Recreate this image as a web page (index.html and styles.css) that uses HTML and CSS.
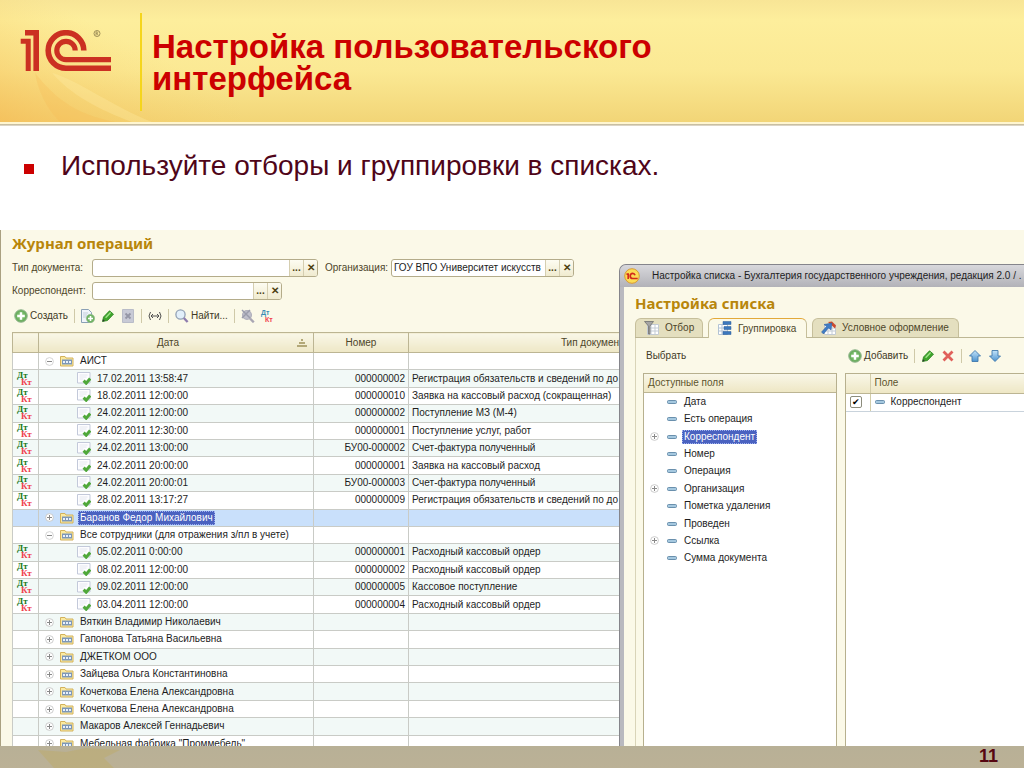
FILE: index.html
```
<!DOCTYPE html>
<html lang="ru">
<head>
    <meta charset="UTF-8">
    <meta name="viewport" content="width=device-width, initial-scale=1.0">
    <title>Настройка пользовательского интерфейса</title>
    <link rel="stylesheet" href="styles.css">
</head>
<body>
    <!-- Shared icons -->
    <svg class="sprite" width="0" height="0" aria-hidden="true">
        <defs>
            <linearGradient id="blue" x1="0" y1="0" x2="0" y2="1">
                <stop offset="0" stop-color="#c3e4fa"/>
                <stop offset="1" stop-color="#4c93cf"/>
            </linearGradient>
            <radialGradient id="green">
                <stop offset="0" stop-color="#8fd07c"/>
                <stop offset="1" stop-color="#62a658"/>
            </radialGradient>
        </defs>
        <symbol id="add" viewBox="0 0 14 14">
            <circle cx="7" cy="7" r="6.3" fill="url(#green)" stroke="#9aba94"/>
            <path d="M7 3.2v7.6M3.2 7h7.6" stroke="#fff" stroke-width="2.4"/>
        </symbol>
        <symbol id="pencil" viewBox="0 0 14 14">
            <path d="M1.500 12.500l1-4.500L8.500 1.800l4 3.400-6 6.300z" fill="#3fa52c" stroke="#2a8220" stroke-width=".8"/>
            <path d="M4.600 8.800l5-5.200" stroke="#a2e48c" stroke-width="1.400"/>
            <path d="M1.500 12.500l.5-2.200 1.800 1.600z" fill="#333"/>
        </symbol>
        <symbol id="plus" viewBox="0 0 9 9">
            <circle cx="4.5" cy="4.5" r="3.9" fill="#fff" stroke="#c0c0c0" stroke-width=".8"/>
            <path d="M4.5 2v5M2 4.5h5" stroke="#8a8a8a"/>
        </symbol>
        <symbol id="minus" viewBox="0 0 9 9">
            <circle cx="4.5" cy="4.5" r="3.9" fill="#fff" stroke="#cacaca" stroke-width=".8"/>
            <path d="M2 4.5h5" stroke="#8a8a8a"/>
        </symbol>
        <symbol id="folder" viewBox="0 0 14 12">
            <path d="M.5 11V1.500h4.500l1 1.500h7V11z" fill="#fbeaa0" stroke="#d3b25c"/>
            <path d="M2 4.500h10v5H2z" fill="#7d97b8"/>
            <path d="M3 7h2M6 7h2M9 7h2" stroke="#e8f1fb" stroke-width="1.800"/>
        </symbol>
        <symbol id="doc" viewBox="0 0 14 13">
            <path d="M.5.500h12.500v10.500H.5z" fill="#fdfdff" stroke="#c3c9da"/>
            <path d="M2.500 3h8M2.500 5h7M2.500 7h4" stroke="#dde1eb" stroke-width=".8"/>
            <path d="M6.600 8.600l2.600 2.600 4-4.600" fill="none" stroke="#4fa83a" stroke-width="3"/>
        </symbol>
        <symbol id="field" viewBox="0 0 10 4">
            <rect x=".5" y=".5" width="9" height="3" rx="1" fill="#a5c8df" stroke="#5d87a5" stroke-width=".9"/>
        </symbol>
    </svg>

    <header class="slide-header">
        <svg class="swirl" viewBox="0 0 240 124" preserveAspectRatio="none" aria-hidden="true">
            <defs>
                <linearGradient id="glow" x1="0" y1="1" x2="1" y2="0">
                    <stop offset="0" stop-color="#f5bb55" stop-opacity=".75"/>
                    <stop offset=".6" stop-color="#f8d470" stop-opacity="0"/>
                </linearGradient>
            </defs>
            <path d="M0 0h240v124H0z" fill="url(#glow)"/>
            <path d="M35 74c20 26 40 42 80 50H60C46 110 38 92 35 74z" fill="#f8b950" opacity=".25"/>
            <path d="M52 74c30 10 60 34 100 50h-20C100 112 70 96 52 74z" fill="#fff0a8" opacity=".3"/>
        </svg>
        <svg class="logo" viewBox="0 0 92 42" role="img" aria-label="1С">
            <g fill="none" stroke="#cb3022">
                <path d="M5 2.800h11.200V41" stroke-width="5.600"/>
                <path d="M.7 11.200h7.500V41" stroke-width="5"/>
                <path d="M63.800 20.500A17.800 17.800 0 1 0 46 38.300H91" stroke-width="5.600"/>
                <path d="M55.200 20.500A9.200 9.200 0 1 0 46 29.700H91" stroke-width="5.200"/>
            </g>
            <circle cx="77" cy="3.500" r="3" fill="none" stroke="#8a7a4a" stroke-width=".8"/>
            <path d="M76 5.400V1.900h1.200a1 1 0 0 1 0 1.800H76m1.200 0l1 1.700" fill="none" stroke="#8a7a4a" stroke-width=".7"/>
        </svg>
        <h1>Настройка пользовательского<br>интерфейса</h1>
    </header>

    <ul class="bullets">
        <li>Используйте отборы и группировки в списках.</li>
    </ul>

    <main class="screen">
        <section class="journal">
            <h2>Журнал операций</h2>
            <div class="filters">
                <label class="type-label" for="doc-type">Тип документа:</label>
                <div class="picker picker-type">
                    <input type="text" id="doc-type">
                    <button type="button">...</button><button type="button" class="clear">✕</button>
                </div>
                <label class="org-label" for="org">Организация:</label>
                <div class="picker picker-org">
                    <input type="text" id="org" value="ГОУ ВПО Университет искусств">
                    <button type="button">...</button><button type="button" class="clear">✕</button>
                </div>
            </div>
            <div class="filters">
                <label class="type-label" for="partner">Корреспондент:</label>
                <div class="picker picker-partner">
                    <input type="text" id="partner">
                    <button type="button">...</button><button type="button" class="clear">✕</button>
                </div>
            </div>
            <div class="toolbar">
                <button type="button" class="tool"><svg width="14" height="14"><use href="#add"/></svg>Создать</button>
                <span class="sep"></span>
                <button type="button" class="tool" aria-label="Скопировать">
                    <svg width="14" height="14" viewBox="0 0 14 14">
                        <path d="M.5.500h7l3 3v10H.5z" fill="#f0f4fa" stroke="#8aa0b5"/>
                        <path d="M2 4h5M2 6h4M2 8h3" stroke="#c4cfdb"/>
                        <circle cx="9.500" cy="9.500" r="4.200" fill="#6fb463" stroke="#9aba94" stroke-width=".6"/>
                        <path d="M9.500 7v5M7 9.500h5" stroke="#fff" stroke-width="1.600"/>
                    </svg>
                </button>
                <button type="button" class="tool" aria-label="Изменить"><svg width="14" height="14"><use href="#pencil"/></svg></button>
                <button type="button" class="tool" aria-label="Удалить">
                    <svg width="14" height="14" viewBox="0 0 14 14">
                        <path d="M1.500.500h11v13h-11z" fill="#c8cad6" stroke="#b9bcc8"/>
                        <path d="M4.500 4.500l5 5m0-5l-5 5" stroke="#9496a6" stroke-width="1.800"/>
                    </svg>
                </button>
                <span class="sep"></span>
                <button type="button" class="tool" aria-label="Период">
                    <svg width="14" height="14" viewBox="0 0 14 14" fill="none" stroke="#505050">
                        <path d="M2.500 3Q-.5 7 2.500 11M11.500 3Q14.500 7 11.500 11M3 7h8M5 5L3 7l2 2M9 5l2 2-2 2"/>
                    </svg>
                </button>
                <span class="sep"></span>
                <button type="button" class="tool">
                    <svg width="14" height="14" viewBox="0 0 14 14">
                        <circle cx="5.500" cy="5.500" r="4.600" fill="#e2effa" stroke="#92a1b5" stroke-width="1.300"/>
                        <path d="M8.800 9l3.800 4" stroke="#8e7cae" stroke-width="2.400"/>
                    </svg>Найти...</button>
                <span class="sep"></span>
                <button type="button" class="tool" aria-label="Отменить поиск">
                    <svg width="14" height="14" viewBox="0 0 14 14">
                        <circle cx="6" cy="6" r="4.400" fill="#c0c0cc" stroke="#b0b0bc" stroke-width="1.300"/>
                        <path d="M9 9.500l3.800 3.800" stroke="#a9a6b3" stroke-width="2.400"/>
                        <path d="M1 1l8 8m0-8L1 9" stroke="#9a9cab" stroke-width="1.500"/>
                    </svg>
                </button>
                <button type="button" class="tool entries" aria-label="Проводки">
                    <span class="dt">Дт</span><span class="kt">Кт</span>
                </button>
            </div>
            <table class="operations">
                <colgroup><col class="col-mark"><col class="col-date"><col class="col-num"><col></colgroup>
                <thead>
                    <tr>
                        <th></th>
                        <th>Дата
                            <svg class="sort" width="12" height="8" viewBox="0 0 12 8"><path d="M5 1h2M3 4h6M1 7h10" stroke="#b3a878" stroke-width="2"/></svg>
                        </th>
                        <th>Номер</th>
                        <th>Тип документа</th>
                    </tr>
                </thead>
                <tbody id="rows"></tbody>
            </table>
        </section>

        <section class="dialog">
            <div class="titlebar">
                <svg width="16" height="16" viewBox="0 0 16 16">
                    <circle cx="8" cy="8" r="7.300" fill="#fbdc55" stroke="#d99b35"/>
                    <path d="M2.500 6.200h1.700V11M11 7.200C10.600 5.800 9.700 5.300 8.700 5.300 7.200 5.300 6.200 6.500 6.200 8s1 2.500 2.500 2.500h5" fill="none" stroke="#d22a1c" stroke-width="1.700"/>
                </svg>
                <span>Настройка списка - Бухгалтерия государственного учреждения, редакция 2.0 / .</span>
            </div>
            <div class="dialog-body">
                <h2>Настройка списка</h2>
                <div class="tabs" role="tablist">
                    <button type="button" role="tab" class="tab tab-filter">
                        <svg width="16" height="15" viewBox="0 0 16 15">
                            <path d="M3.500 3.500h11v10h-11zM7 3.500v10M11 3.500v10M3.500 7h11M3.500 10h11" fill="#fff" stroke="#c3cbd4"/>
                            <path d="M.5.500h9L6 5v8H4.500V5z" fill="#a5a5a5" stroke="#6e6e6e" stroke-width=".8"/>
                        </svg>Отбор</button>
                    <button type="button" role="tab" class="tab tab-group active" aria-selected="true">
                        <svg width="16" height="15" viewBox="0 0 16 15">
                            <path d="M1.500 3.500h9v10h-9zM5 3.500v10M1.500 7h9M1.500 10h9" fill="#fff" stroke="#b3c3d4"/>
                            <path d="M6 .500h8v3H6zM7 5.500h7v3H7zM6 10.500h8v3H6z" fill="#3c78bd" stroke="#2b5c98" stroke-width=".5"/>
                        </svg>Группировка</button>
                    <button type="button" role="tab" class="tab tab-style">
                        <svg width="16" height="15" viewBox="0 0 16 15">
                            <path d="M3.500 3.500h11v10h-11zM7 3.500v10M11 3.500v10M3.500 7h11M3.500 10h11" fill="#fff" stroke="#c3cbd4"/>
                            <path d="M7 1l4-.5 4 4-1 3z" fill="#cf4a2c"/>
                            <path d="M3 3.500L11 2l-1 7-2.500-2L2.500 13 .5 11l5-5.500z" fill="#3f7cc4" stroke="#2c5d9b" stroke-width=".5"/>
                        </svg>Условное оформление</button>
                </div>
                <div class="panes">
                    <div class="pane pane-available">
                        <div class="toolbar">
                            <button type="button" class="tool">Выбрать</button>
                        </div>
                        <div class="box">
                            <div class="box-head">Доступные поля</div>
                            <ul class="fields">
                                <li><svg class="mark" width="10" height="4"><use href="#field"/></svg><span>Дата</span></li>
                                <li><svg class="mark" width="10" height="4"><use href="#field"/></svg><span>Есть операция</span></li>
                                <li class="selected"><svg class="toggle" width="9" height="9"><use href="#plus"/></svg><svg class="mark" width="10" height="4"><use href="#field"/></svg><span>Корреспондент</span></li>
                                <li><svg class="mark" width="10" height="4"><use href="#field"/></svg><span>Номер</span></li>
                                <li><svg class="mark" width="10" height="4"><use href="#field"/></svg><span>Операция</span></li>
                                <li><svg class="toggle" width="9" height="9"><use href="#plus"/></svg><svg class="mark" width="10" height="4"><use href="#field"/></svg><span>Организация</span></li>
                                <li><svg class="mark" width="10" height="4"><use href="#field"/></svg><span>Пометка удаления</span></li>
                                <li><svg class="mark" width="10" height="4"><use href="#field"/></svg><span>Проведен</span></li>
                                <li><svg class="toggle" width="9" height="9"><use href="#plus"/></svg><svg class="mark" width="10" height="4"><use href="#field"/></svg><span>Ссылка</span></li>
                                <li><svg class="mark" width="10" height="4"><use href="#field"/></svg><span>Сумма документа</span></li>
                            </ul>
                        </div>
                    </div>
                    <div class="pane pane-chosen">
                        <div class="toolbar">
                            <button type="button" class="tool"><svg width="14" height="14"><use href="#add"/></svg>Добавить</button>
                            <span class="sep"></span>
                            <button type="button" class="tool" aria-label="Изменить"><svg width="14" height="14"><use href="#pencil"/></svg></button>
                            <button type="button" class="tool" aria-label="Удалить">
                                <svg width="14" height="14" viewBox="0 0 14 14"><path d="M2.500 2.500l9 9m0-9l-9 9" stroke="#e0605a" stroke-width="2.800"/></svg>
                            </button>
                            <span class="sep"></span>
                            <button type="button" class="tool" aria-label="Вверх">
                                <svg width="14" height="14" viewBox="0 0 14 14"><path d="M7 1.500L12.500 7H10v5.500H4V7H1.500z" fill="url(#blue)" stroke="#3f79ad" stroke-width=".9"/></svg>
                            </button>
                            <button type="button" class="tool" aria-label="Вниз">
                                <svg width="14" height="14" viewBox="0 0 14 14"><path d="M7 12.500L1.500 7H4V1.500h6V7h2.500z" fill="url(#blue)" stroke="#3f79ad" stroke-width=".9"/></svg>
                            </button>
                        </div>
                        <div class="box">
                            <table class="chosen">
                                <colgroup><col class="col-check"><col></colgroup>
                                <thead><tr><th></th><th>Поле</th></tr></thead>
                                <tbody>
                                    <tr>
                                        <td><input type="checkbox" id="use-partner" checked></td>
                                        <td><label for="use-partner"><svg class="mark" width="10" height="4"><use href="#field"/></svg>Корреспондент</label></td>
                                    </tr>
                                </tbody>
                            </table>
                        </div>
                    </div>
                </div>
            </div>
        </section>
    </main>

    <footer class="slide-footer">
        <svg class="leaf" width="90" height="22" viewBox="0 0 90 22" aria-hidden="true"><path d="M2 4l28 2 20-4 34 2-16 8 10 10H18z" fill="#bda95f" opacity=".4"/></svg>
        <span>11</span>
    </footer>

    <script>
        // open: true - expanded group, false - collapsed group
        const rows = [
            { group: 'АИСТ', open: true },
            ['17.02.2011 13:58:47', '000000002', 'Регистрация обязательств и сведений по до'],
            ['18.02.2011 12:00:00', '000000010', 'Заявка на кассовый расход (сокращенная)'],
            ['24.02.2011 12:00:00', '000000002', 'Поступление МЗ (М-4)'],
            ['24.02.2011 12:30:00', '000000001', 'Поступление услуг, работ'],
            ['24.02.2011 13:00:00', 'БУ00-000002', 'Счет-фактура полученный'],
            ['24.02.2011 20:00:00', '000000001', 'Заявка на кассовый расход'],
            ['24.02.2011 20:00:01', 'БУ00-000003', 'Счет-фактура полученный'],
            ['28.02.2011 13:17:27', '000000009', 'Регистрация обязательств и сведений по до'],
            { group: 'Баранов Федор Михайлович', open: false, selected: true },
            { group: 'Все сотрудники (для отражения з/пл в учете)', open: true },
            ['05.02.2011 0:00:00', '000000001', 'Расходный кассовый ордер'],
            ['08.02.2011 12:00:00', '000000002', 'Расходный кассовый ордер'],
            ['09.02.2011 12:00:00', '000000005', 'Кассовое поступление'],
            ['03.04.2011 12:00:00', '000000004', 'Расходный кассовый ордер'],
            { group: 'Вяткин Владимир Николаевич', open: false },
            { group: 'Гапонова Татьяна Васильевна', open: false },
            { group: 'ДЖЕТКОМ ООО', open: false },
            { group: 'Зайцева Ольга Константиновна', open: false },
            { group: 'Кочеткова Елена Александровна', open: false },
            { group: 'Кочеткова Елена Александровна', open: false },
            { group: 'Макаров Алексей Геннадьевич', open: false },
            { group: 'Мебельная фабрика "Проммебель"', open: false }
        ];

        function icon(name, w, h) {
            return `<svg width="${w}" height="${h}"><use href="#${name}"/></svg>`;
        }

        document.getElementById('rows').innerHTML = rows.map(row => {
            if (row.group) {
                return `<tr class="group${row.selected ? ' selected' : ''}"><td></td>
                    <td><div class="cell">${icon(row.open ? 'minus' : 'plus', 9, 9)}${icon('folder', 14, 12)}<span>${row.group}</span></div></td>
                    <td></td><td></td></tr>`;
            }
            return `<tr><td class="marks"><div class="dt">Дт</div><div class="kt">Кт</div></td>
                <td><div class="cell cell-doc">${icon('doc', 14, 13)}<span>${row[0]}</span></div></td>
                <td class="num">${row[1]}</td><td>${row[2]}</td></tr>`;
        }).join('');
    </script>
</body>
</html>
```
FILE: styles.css
```
* {
    box-sizing: border-box;
}

body {
    margin: 0;
    height: 100vh;
    display: flex;
    flex-direction: column;
    overflow: hidden;
    background-color: #fff;
    font-family: "Liberation Sans", Arial, sans-serif;
}

h1, h2, ul {
    margin: 0;
    padding: 0;
}

svg {
    flex: none;
}

.sprite {
    position: absolute;
}

/* Slide header */
.slide-header {
    flex: none;
    position: relative;
    display: flex;
    align-items: flex-start;
    height: 126px;
    padding: 13px 20px 0;
    background: linear-gradient(#f8e596 0, #fdee9c 20px, #fbe994 70px, #f2d577 122px, #fff6d0 122px, #fff6d0 124px, #c0b491 124px, #e5e0d5 126px);
}

.swirl {
    position: absolute;
    left: 0;
    top: 0;
    width: 240px;
    height: 122px;
}

.logo {
    position: relative;
    width: 92px;
    height: 42px;
    margin-top: 17px;
}

.slide-header h1 {
    position: relative;
    min-height: 98px;
    margin-left: 28px;
    padding: 18px 0 0 10px;
    border-left: 2px solid #f5d51c;
    color: #cc0000;
    font-size: 33px;
    line-height: 32px;
}

.bullets {
    flex: none;
    height: 104px;
    padding: 23px 24px 0;
    list-style: none;
    color: #4f0519;
    font-size: 28px;
    line-height: 34px;
}

.bullets li {
    display: flex;
    align-items: center;
    gap: 27px;
}

.bullets li::before {
    content: "";
    width: 10px;
    height: 10px;
    margin-top: 6px;
    background-color: #cc0000;
}

/* Program window */
.screen {
    flex: 1;
    min-height: 0;
    position: relative;
    overflow: hidden;
    border-left: 1px solid #aaa181;
    background-color: #fbf9e8;
    color: #1d1d1d;
    font-size: 10px;
    line-height: 12px;
}

.screen h2 {
    color: #b8860b;
    font-family: "Noto Sans", "Open Sans", sans-serif;
    font-size: 15px;
    line-height: 18px;
}

.screen button,
.screen input {
    font-family: inherit;
    font-size: 10px;
    line-height: 12px;
}

.journal {
    padding: 4px 0 0 11px;
}

.filters {
    display: flex;
    align-items: center;
    height: 18px;
    margin-top: 5px;
    color: #4d4529;
}

.journal h2 + .filters {
    margin-top: 7px;
}

.type-label {
    width: 80px;
    white-space: nowrap;
}

.org-label {
    width: 66px;
    margin-left: 7px;
    white-space: nowrap;
}

.picker {
    display: flex;
    height: 18px;
    border: 1px solid #b4ac8a;
    border-radius: 3px;
    overflow: hidden;
    background-color: #fff;
}

.picker-type {
    width: 226px;
}

.picker-org {
    width: 183px;
}

.picker-partner {
    width: 190px;
}

.picker input {
    flex: 1;
    min-width: 0;
    margin: 0;
    padding: 0 2px;
    border: none;
    outline: none;
    background: none;
    color: #1d1d1d;
}

.picker button {
    width: 14px;
    margin: 0;
    padding: 0;
    border: none;
    border-left: 1px solid #d5ceb0;
    background: linear-gradient(#fdfcf2, #f0ebcf);
    color: #4c3f10;
    font-weight: bold;
}

.toolbar {
    display: flex;
    align-items: center;
    gap: 6px;
    height: 18px;
}

.journal .toolbar {
    margin: 7px 0 7px 2px;
}

.tool {
    display: flex;
    align-items: center;
    gap: 2px;
    margin: 0;
    padding: 0;
    border: none;
    background: none;
    color: #3f3a26;
}

.sep {
    width: 1px;
    height: 14px;
    background-color: #cfc9a8;
}

/* Debit / credit mark */
.dt {
    color: #1b7a1b;
}

.kt {
    padding-left: 4px;
    color: #f0404c;
}

.marks {
    font-family: "Liberation Serif", serif;
    font-size: 9px;
    font-weight: bold;
    line-height: 7px;
}

.screen .entries {
    flex-direction: column;
    align-items: flex-start;
    gap: 0;
    font-size: 7px;
    font-weight: bold;
    line-height: 7px;
}

.entries .dt {
    color: #3a8db5;
}

table {
    border-collapse: collapse;
    table-layout: fixed;
}

th {
    font-weight: normal;
}

/* Journal of operations */
.operations {
    width: 770px;
    height: 421px;
    border: 1px solid #b7b08e;
    background-color: #fff;
}

.col-mark {
    width: 26px;
}

.col-date {
    width: 275px;
}

.col-num {
    width: 95px;
}

.operations th {
    position: relative;
    height: 20px;
    padding: 0;
    border: 1px solid #bcb593;
    background: linear-gradient(#f9f7e8, #eee7c5);
    color: #4d4529;
}

.operations th:nth-child(2) {
    padding-right: 16px;
}

.sort {
    position: absolute;
    right: 5px;
    top: 6px;
}

.operations td {
    padding: 0 3px;
    border: 1px solid #c9cbc6;
    white-space: nowrap;
    overflow: hidden;
}

.operations tbody tr:nth-child(even) {
    background-color: #f2f9f7;
}

.operations svg {
    display: block;
}

.operations .num {
    text-align: right;
}

.operations .marks {
    padding: 0 0 0 4px;
}

.cell {
    display: flex;
    align-items: center;
    gap: 6px;
    height: 14px;
    padding-left: 3px;
}

.cell-doc {
    padding-left: 35px;
}

.operations tbody tr.selected {
    background-color: #c9e0fb;
}

.selected span {
    margin: 0 -2px;
    padding: 1px 2px;
    outline: 1px dotted #9fb0ee;
    outline-offset: -1px;
    background-color: #4a62c0;
    color: #fff;
}

/* Settings dialog lies over the journal */
.dialog {
    position: absolute;
    left: 618px;
    top: 34px;
    right: 0;
    bottom: 0;
    display: flex;
    flex-direction: column;
    border: 1px solid #85858b;
    border-right: none;
    border-bottom: none;
    border-radius: 7px 0 0 0;
    background-color: #b9b9bf;
    overflow: hidden;
}

.titlebar {
    flex: none;
    display: flex;
    align-items: center;
    gap: 12px;
    height: 22px;
    padding-left: 4px;
    background: linear-gradient(#d8d8dc, #b2b2b8);
    white-space: nowrap;
}

.dialog-body {
    flex: 1;
    display: flex;
    flex-direction: column;
    margin-left: 4px;
    padding: 7px 0 0 11px;
    background-color: #fbf9e8;
}

.tabs {
    flex: none;
    display: flex;
    align-items: flex-end;
    gap: 5px;
    height: 26px;
    border-bottom: 1px solid #bdb794;
}

.tab {
    display: flex;
    align-items: center;
    gap: 5px;
    height: 19px;
    margin: 0;
    padding: 0 8px;
    border: 1px solid #c6bf9b;
    border-bottom: none;
    border-radius: 6px 6px 0 0;
    background-color: #e4dfbf;
    color: #4d4529;
    white-space: nowrap;
}

.tab-filter {
    width: 68px;
}

.tab-group {
    width: 99px;
}

.tab-style {
    width: 147px;
}

.tab.active {
    height: 20px;
    margin-bottom: -1px;
    border-top-color: #e2a93a;
    background-color: #fbf9e8;
}

.panes {
    flex: 1;
    display: flex;
    gap: 8px;
    padding-left: 7px;
    border-left: 1px solid #d9d4b8;
}

.pane {
    display: flex;
    flex-direction: column;
}

.pane-available {
    width: 194px;
}

.pane-chosen {
    flex: 1;
}

.pane .toolbar {
    flex: none;
    margin: 9px 3px 8px;
}

.box {
    flex: 1;
    border: 1px solid #b7b08e;
    border-bottom: none;
    background-color: #fff;
}

.pane-chosen .box {
    border-right: none;
}

.box-head,
.chosen th {
    height: 19px;
    padding: 0 4px;
    border-bottom: 1px solid #bcb593;
    background: linear-gradient(#f9f7e8, #eee7c5);
    color: #5d542c;
    line-height: 18px;
    text-align: left;
}

.fields {
    display: flex;
    flex-direction: column;
    height: 174px;
    list-style: none;
}

.fields li {
    flex: 1;
    display: flex;
    align-items: center;
}

.fields .toggle {
    margin: 0 -15px 0 6px;
}

.fields .mark {
    margin: 0 7px 0 23px;
}

.fields .selected span {
    margin: 0 -2px;
}

.chosen {
    width: 100%;
}

.col-check {
    width: 24px;
}

.chosen th + th,
.chosen td + td {
    border-left: 1px solid #d3cda9;
}

.chosen td {
    height: 18px;
    padding: 0 4px;
    border-bottom: 1px solid #c9d3dc;
}

.chosen label {
    display: flex;
    align-items: center;
    gap: 6px;
}

.chosen input {
    appearance: none;
    display: block;
    width: 12px;
    height: 12px;
    margin: 0;
    border: 1px solid #8c8c7c;
    border-radius: 2px;
    background-color: #fff;
}

.chosen input:checked::before {
    content: "✔";
    display: block;
    font-size: 9px;
    line-height: 10px;
    text-align: center;
}

/* Slide footer */
.slide-footer {
    flex: none;
    position: relative;
    display: flex;
    justify-content: flex-end;
    height: 22px;
    padding-right: 26px;
    background: linear-gradient(#b8b096, #bbb196);
    color: #560612;
    font-size: 18px;
    font-weight: bold;
    line-height: 21px;
}

.leaf {
    position: absolute;
    left: 36px;
    top: 0;
}
```
